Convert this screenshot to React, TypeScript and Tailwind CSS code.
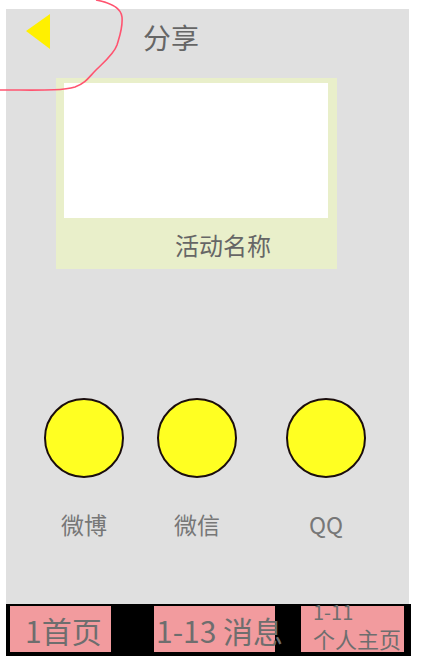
export default function App() {
  const font = { fontFamily: '"Noto Sans CJK SC", "Noto Sans", sans-serif' };
  const shares = [
    { name: "微博", ml: "ml-[38px]" },
    { name: "微信", ml: "ml-[33px]" },
    { name: "QQ", ml: "ml-[49px]" },
  ];

  return (
    <div className="relative w-[421px] h-[661px] bg-white overflow-hidden" style={font}>
      {/* main panel */}
      <div className="ml-[6px] pt-[9px]">
        <div className="w-[403px] h-[595px] bg-[#e0e0e0]">
          {/* header */}
          <div className="flex items-start h-[69px]">
            <div className="ml-[20px] mt-[5px] w-0 h-0 border-t-[17px] border-b-[18px] border-r-[24px] border-t-transparent border-b-transparent border-r-[#fff000]" />
            <div className="ml-[93px] mt-[14px] text-[28px] leading-none text-[#666]">分享</div>
          </div>

          {/* activity card */}
          <div className="ml-[50px] w-[281px] h-[191px] bg-[#e9efca] pt-[5px]">
            <div className="ml-[8px] w-[264px] h-[135px] bg-white" />
            <div className="ml-[119px] mt-[15px] text-[24px] leading-none text-[#666]">活动名称</div>
          </div>

          {/* share targets */}
          <div className="flex mt-[129px]">
            {shares.map((s) => (
              <div key={s.name} className={`${s.ml} flex flex-col items-center w-[80px]`}>
                <div className="w-[80px] h-[80px] rounded-full bg-[#ffff22] border-2 border-[#1a0d0d]" />
                <div className="mt-[35px] text-[23px] leading-none text-[#777] whitespace-nowrap">{s.name}</div>
              </div>
            ))}
          </div>
        </div>

        {/* bottom tab bar */}
        <div className="w-[405px] h-[52px] bg-black flex items-start pt-[2px]">
          <div className="ml-[4px] w-[101px] h-[46px] bg-[#f29b9e] pl-[15px] pt-[9px] text-[30px] leading-none text-[#6e6e6e] whitespace-nowrap">
            1首页
          </div>
          <div className="ml-[43px] w-[121px] h-[46px] bg-[#f29b9e] pl-[2px] pt-[9px] text-[30px] leading-none text-[#6e6e6e] whitespace-nowrap">
            1-13 消息
          </div>
          <div className="ml-[26px] w-[103px] h-[46px] bg-[#f29b9e] text-[#6e6e6e] whitespace-nowrap">
            <div className="-mt-[4px] ml-[12px] text-[20px] leading-none">1-11</div>
            <div className="mt-[5px] ml-[12px] text-[22px] leading-none">个人主页</div>
          </div>
        </div>
      </div>

      {/* red hand-drawn annotation */}
      <svg className="absolute left-0 top-0" width="140" height="100" viewBox="0 0 140 100">
        <path
          d="M96 0 C112 3 121 8 122 17 C123 28 119 38 117 45 C114 54 104 62 96 70 C89 77 86 83 75 87 C62 91 40 90 0 90"
          fill="none"
          stroke="#ff5470"
          strokeWidth="1.6"
        />
      </svg>
    </div>
  );
}
